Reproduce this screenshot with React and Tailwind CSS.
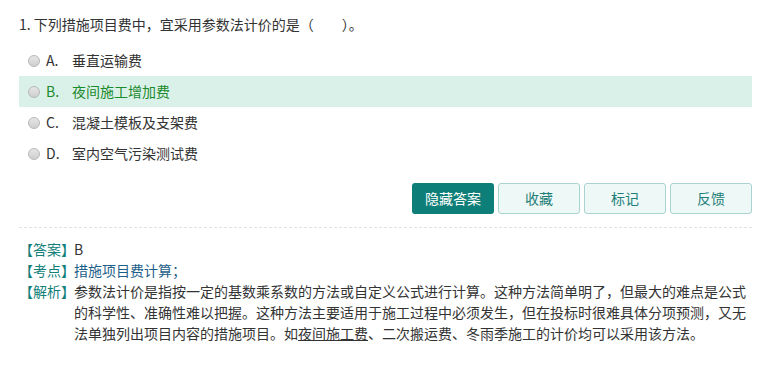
import React from 'react';

const options = [
  { key: 'A', text: '垂直运输费' },
  { key: 'B', text: '夜间施工增加费', active: true },
  { key: 'C', text: '混凝土模板及支架费' },
  { key: 'D', text: '室内空气污染测试费' },
];

const Radio = () => (
  <span className="inline-block w-[12px] h-[12px] rounded-full border border-[#b8b8b8] bg-gradient-to-b from-[#e6e6e6] to-[#cfcfcf] shrink-0" />
);

const App = () => {
  return (
    <div
      className="w-[771px] h-[368px] bg-white text-[#333] text-[14px] px-[19px] overflow-hidden"
      style={{ fontFamily: '"Noto Sans CJK SC", "Liberation Sans", sans-serif' }}
    >
      <p className="pt-[14px] leading-[20px]">
        1. 下列措施项目费中，宜采用参数法计价的是（<span className="inline-block w-[28px]" />）。
      </p>

      <ul className="mt-[11px]">
        {options.map((o) => (
          <li
            key={o.key}
            className={
              'h-[31px] flex items-center pl-[9px] ' +
              (o.active ? 'bg-[#daf1ea] text-[#1a8a2a]' : '')
            }
          >
            <Radio />
            <span className="ml-[6px] w-[26px]">{o.key}.</span>
            <span>{o.text}</span>
          </li>
        ))}
      </ul>

      <div className="mt-[14px] flex justify-end gap-[4px]">
        <button className="w-[82px] h-[31px] rounded-[3px] bg-[#0e7f78] text-white">隐藏答案</button>
        <button className="w-[82px] h-[31px] rounded-[3px] bg-[#eef8f7] border border-[#a9d3cf] text-[#1f7f78]">收藏</button>
        <button className="w-[82px] h-[31px] rounded-[3px] bg-[#eef8f7] border border-[#a9d3cf] text-[#1f7f78]">标记</button>
        <button className="w-[82px] h-[31px] rounded-[3px] bg-[#eef8f7] border border-[#a9d3cf] text-[#1f7f78]">反馈</button>
      </div>

      <div className="mt-[13px] border-t border-dashed border-[#e2e2e2]" />

      <div className="mt-[11px] leading-[21px]">
        <div className="flex">
          <span className="text-[#12807a] w-[55px] shrink-0">【答案】</span>
          <span>B</span>
        </div>
        <div className="flex">
          <span className="text-[#12807a] w-[55px] shrink-0">【考点】</span>
          <span className="text-[#1d5f8a]">措施项目费计算；</span>
        </div>
        <div className="flex">
          <span className="text-[#12807a] w-[55px] shrink-0">【解析】</span>
          <p>
            参数法计价是指按一定的基数乘系数的方法或自定义公式进行计算。这种方法简单明了，但最大的难点是公式
            <br />
            的科学性、准确性难以把握。这种方法主要适用于施工过程中必须发生，但在投标时很难具体分项预测，又无
            <br />
            法单独列出项目内容的措施项目。如<span className="underline">夜间施工费</span>、二次搬运费、冬雨季施工的计价均可以采用该方法。
          </p>
        </div>
      </div>
    </div>
  );
};

export default App;
